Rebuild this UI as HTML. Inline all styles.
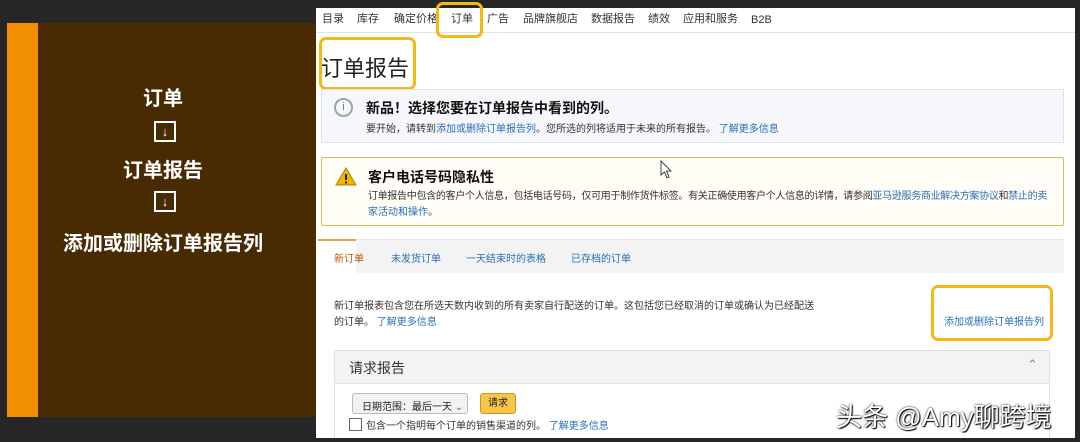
<!DOCTYPE html>
<html><head><meta charset="utf-8"><style>
*{margin:0;padding:0;box-sizing:border-box}
body{width:1080px;height:442px;background:#262626;position:relative;overflow:hidden;font-family:"Liberation Sans","Noto Sans CJK SC",sans-serif}
.a{position:absolute;white-space:nowrap}
.lt{color:#fff;font-weight:bold;font-size:20px;left:24px;width:278px;text-align:center}
.ab{border:2px solid #fff;width:22px;height:21px;left:154px;color:#fff;font-size:13px;text-align:center;line-height:17px;font-weight:bold}
.nv{position:absolute;top:11px;font-size:11px;line-height:16px;height:16px;color:#333;white-space:nowrap}
.blue{color:#2a6fb5}
.yb{border:3px solid #f5b915;border-radius:7px}
</style></head><body>
<div class="a" style="left:7px;top:23px;width:31px;height:394px;background:#f09000"></div>
<div class="a" style="left:38px;top:23px;width:278px;height:394px;background:#482b03"></div>
<div class="a lt" style="top:82px">订单</div>
<div class="a ab" style="top:121px">↓</div>
<div class="a lt" style="top:154px">订单报告</div>
<div class="a ab" style="top:191px">↓</div>
<div class="a lt" style="top:227px">添加或删除订单报告列</div>

<div class="a" style="left:316px;top:8px;width:759px;height:430px;background:#fff"></div>
<div class="nv" style="left:322px">目录</div>
<div class="nv" style="left:357px">库存</div>
<div class="nv" style="left:394px">确定价格</div>
<div class="nv" style="left:451px">订单</div>
<div class="nv" style="left:487px">广告</div>
<div class="nv" style="left:523px">品牌旗舰店</div>
<div class="nv" style="left:591px">数据报告</div>
<div class="nv" style="left:648px">绩效</div>
<div class="nv" style="left:683px">应用和服务</div>
<div class="nv" style="left:751px;top:12px;font-family:'Liberation Sans',sans-serif">B2B</div>
<div class="a" style="left:316px;top:32px;width:759px;height:1px;background:#e3e3e3"></div>
<div class="a yb" style="left:436px;top:2px;width:47px;height:36px"></div>
<div class="a" style="left:321px;top:51px;font-size:22px;color:#222">订单报告</div>
<div class="a yb" style="left:319px;top:37px;width:97px;height:53px"></div>

<div class="a" style="left:321px;top:89px;width:743px;height:54px;background:#f5f7fa;border:1px solid #dde3ea"></div>
<div class="a" style="left:334px;top:98px;width:19px;height:19px;border:2px solid #9aa5ad;border-radius:50%;color:#777;font-size:11px;text-align:center;line-height:15px">i</div>
<div class="a" style="left:366px;top:98px;font-size:14px;font-weight:bold;color:#111">新品！选择您要在订单报告中看到的列。</div>
<div class="a" style="left:366px;top:120px;font-size:10px;color:#333">要开始，请转到<span class="blue">添加或删除订单报告列</span>。您所选的列将适用于未来的所有报告。 <span class="blue">了解更多信息</span></div>

<div class="a" style="left:321px;top:157px;width:743px;height:69px;background:#fffdf6;border:1px solid #d9b860;border-radius:2px"></div>
<svg class="a" style="left:335px;top:167px" width="22" height="19"><path d="M11 1 L21 18 L1 18 Z" fill="#f2b600" stroke="#b08000" stroke-width="1"/><rect x="10" y="7" width="2" height="6" fill="#222"/><rect x="10" y="14.5" width="2" height="2" fill="#222"/></svg>
<div class="a" style="left:368px;top:167px;font-size:14px;font-weight:bold;color:#111">客户电话号码隐私性</div>
<div class="a" style="left:368px;top:187px;font-size:10px;color:#333;letter-spacing:-0.3px">订单报告中包含的客户个人信息，包括电话号码，仅可用于制作货件标签。有关正确使用客户个人信息的详情，请参阅<span class="blue">亚马逊服务商业解决方案协议</span>和<span class="blue">禁止的卖</span></div>
<div class="a blue" style="left:368px;top:203px;font-size:10px">家活动和操作<span style="color:#333">。</span></div>

<div class="a" style="left:318px;top:239px;width:746px;height:34px;background:#f3f3f3;border-top:1px solid #e6e6e6"></div>
<div class="a" style="left:318px;top:239px;width:38px;height:35px;background:#fff;border-top:2px solid #e8a040"></div>
<div class="a" style="left:334px;top:250px;font-size:10px;color:#c45500">新订单</div>
<div class="a blue" style="left:391px;top:250px;font-size:10px">未发货订单</div>
<div class="a blue" style="left:466px;top:250px;font-size:10px">一天结束时的表格</div>
<div class="a blue" style="left:571px;top:250px;font-size:10px">已存档的订单</div>

<div class="a" style="left:334px;top:297px;font-size:10px;color:#333">新订单报表包含您在所选天数内收到的所有卖家自行配送的订单。这包括您已经取消的订单或确认为已经配送</div>
<div class="a" style="left:334px;top:313px;font-size:10px;color:#333">的订单。 <span class="blue">了解更多信息</span></div>
<div class="a blue" style="left:944px;top:313px;font-size:10px">添加或删除订单报告列</div>
<div class="a yb" style="left:931px;top:285px;width:122px;height:56px"></div>

<div class="a" style="left:334px;top:350px;width:716px;height:92px;border:1px solid #e3e3e3;background:#fff"></div>
<div class="a" style="left:334px;top:350px;width:716px;height:34px;background:#f3f3f3;border:1px solid #e3e3e3"></div>
<div class="a" style="left:349px;top:358px;font-size:14px;color:#333">请求报告</div>
<div class="a" style="left:1027px;top:357px;font-size:13px;color:#888">⌃</div>
<div class="a" style="left:352px;top:393px;width:116px;height:21px;border:1px solid #bbb;border-radius:3px;background:#f2f2f2;font-size:10px;color:#222;padding:4px 0 0 9px">日期范围：最后一天 <span style="color:#666">⌄</span></div>
<div class="a" style="left:480px;top:393px;width:36px;height:21px;border:1px solid #c89a20;border-radius:3px;background:#f5c54c;font-size:10px;color:#222;text-align:center;line-height:19px">请求</div>
<div class="a" style="left:349px;top:418px;width:13px;height:13px;border:1px solid #666;background:#fff"></div>
<div class="a" style="left:366px;top:417px;font-size:10px;color:#333">包含一个指明每个订单的销售渠道的列。 <span class="blue">了解更多信息</span></div>
<div class="a" style="left:316px;top:438px;width:764px;height:4px;background:#262626"></div>
<div class="a" style="left:836px;top:397px;font-size:26px;color:#fff;text-shadow:0 0 2px #000,1px 1px 1px #000">头条 @Amy聊跨境</div>
<svg class="a" style="left:660px;top:160px" width="14" height="20"><path d="M1 1 L1 15 L4.5 12 L7 18 L9 17 L6.5 11 L11 11 Z" fill="#fff" stroke="#444"/></svg>
</body></html>
